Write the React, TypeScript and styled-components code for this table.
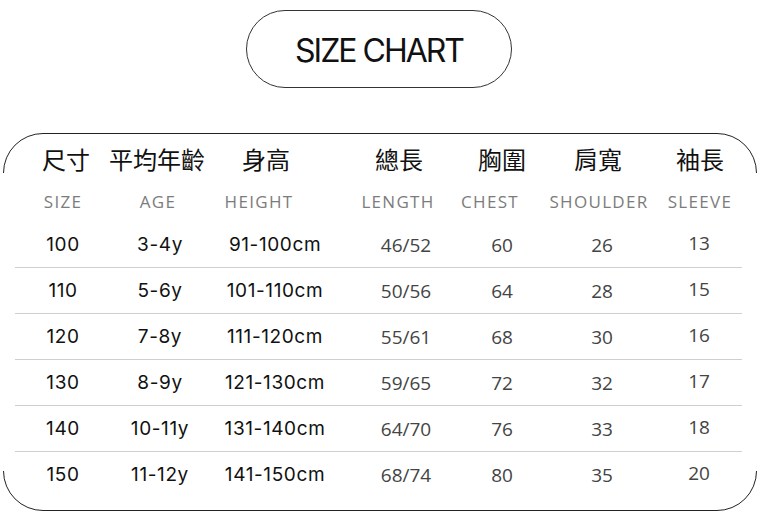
import styled, { createGlobalStyle } from "styled-components";

const SANS = `"Inter", "Liberation Sans", sans-serif`;
const OPEN = `"Open Sans", "Liberation Sans", sans-serif`;
const CJK = `"Noto Sans CJK TC", "Noto Sans CJK SC", sans-serif`;

type Kind = "main" | "first" | "soft";

type Column = {
	zh:string;
	en:string;
	width:number;
	zhShift:number;
	enShift:number;
	dataShift:number;
	kind:Kind;
};

const columns:Column[] = [
	{ zh: "尺寸", en: "SIZE", width: 96, zhShift: 3, enShift: 0, dataShift: 0, kind: "first" },
	{ zh: "平均年齡", en: "AGE", width: 96, zhShift: -2, enShift: -1, dataShift: 1, kind: "main" },
	{ zh: "身高", en: "HEIGHT", width: 126, zhShift: -4, enShift: -11, dataShift: 5, kind: "main" },
	{ zh: "總長", en: "LENGTH", width: 138, zhShift: -3, enShift: -4, dataShift: 4, kind: "soft" },
	{ zh: "胸圍", en: "CHEST", width: 60, zhShift: 1, enShift: -11, dataShift: 1, kind: "soft" },
	{ zh: "肩寬", en: "SHOULDER", width: 136, zhShift: -1, enShift: 0, dataShift: 3, kind: "soft" },
	{ zh: "袖長", en: "SLEEVE", width: 66, zhShift: 0, enShift: 0, dataShift: -1, kind: "soft" },
];

const rows = [
	["100", "3-4y", "91-100cm", "46/52", "60", "26", "13"],
	["110", "5-6y", "101-110cm", "50/56", "64", "28", "15"],
	["120", "7-8y", "111-120cm", "55/61", "68", "30", "16"],
	["130", "8-9y", "121-130cm", "59/65", "72", "32", "17"],
	["140", "10-11y", "131-140cm", "64/70", "76", "33", "18"],
	["150", "11-12y", "141-150cm", "68/74", "80", "35", "20"],
];

const template = columns.map((c) => `${c.width}px`).join(" ");

export default function App() {
	return (
		<Page>
			<GlobalStyle />
			<TitlePill>SIZE CHART</TitlePill>

			<Frame>
				<HeadRow>
					{columns.map((c) => (
						<ZhCell key={c.zh} $shift={c.zhShift}>{ c.zh }</ZhCell>
					))}
				</HeadRow>
				<LabelRow>
					{columns.map((c) => (
						<LabelCell key={c.en} $shift={c.enShift}>{ c.en }</LabelCell>
					))}
				</LabelRow>
				{rows.map((r, i) => (
					<DataRow key={r[0]} $last={i === rows.length - 1}>
						{r.map((v, j) => (
							<DataCell
							key={j}
							$shift={columns[j].dataShift}
							$kind={columns[j].kind}
							$lift={j === columns.length - 1}
							>
								{ v }
							</DataCell>
						))}
					</DataRow>
				))}
			</Frame>
		</Page>
	);
}

const GlobalStyle = createGlobalStyle`
	html, body {
		margin:0;
		padding:0;
		background:#fff;
	}
`;

const Page = styled.div`
	width:758px;
	height:519px;
	padding-top:10px;
	box-sizing:border-box;
	overflow:hidden;
`;

const TitlePill = styled.div`
	width:266px;
	height:78px;
	box-sizing:border-box;
	margin:0 auto;
	border:1px solid #333;
	border-radius:39px;
	display:flex;
	align-items:center;
	justify-content:center;
	font-family:${SANS};
	font-size:32px;
	letter-spacing:-2px;
	color:#111;
	padding-top:3px;
`;

/* rounded frame: only the four corner arcs and top / bottom lines are drawn */
const Frame = styled.div`
	position:relative;
	width:754px;
	box-sizing:border-box;
	margin:45px 0 0 3px;
	border:1px solid #222;
	border-radius:40px;
	padding:0 14px 12px 11px;

	&::before, &::after {
		content:"";
		position:absolute;
		top:39px;
		bottom:39px;
		width:3px;
		background:#fff;
	}
	&::before { left:-2px; }
	&::after { right:-2px; }
`;

const Row = styled.div`
	display:grid;
	grid-template-columns:${template};
	align-items:center;
`;

const HeadRow = styled(Row)`
	height:46px;
`;

const LabelRow = styled(Row)`
	height:42px;
`;

const DataRow = styled(Row)<{ $last:boolean }>`
	height:46px;
	box-sizing:border-box;
	border-bottom:1px solid ${(p) => p.$last ? "transparent" : "#cfcfcf"};
`;

const Cell = styled.div<{ $shift:number }>`
	display:flex;
	justify-content:center;
	white-space:nowrap;
	padding-left:${(p) => Math.max(0, p.$shift * 2)}px;
	padding-right:${(p) => Math.max(0, -p.$shift * 2)}px;
`;

const ZhCell = styled(Cell)`
	font-family:${CJK};
	font-size:24px;
	color:#111;
	padding-top:3px;
`;

const LabelCell = styled(Cell)`
	font-family:${OPEN};
	font-size:17px;
	letter-spacing:1.3px;
	color:#7c7c7c;
`;

const DataCell = styled(Cell)<{ $kind:Kind; $lift:boolean }>`
	font-family:${(p) => p.$kind === "soft" ? OPEN : SANS};
	font-size:19px;
	letter-spacing:${(p) => p.$kind === "soft" ? "0" : "0.6px"};
	font-weight:400;
	color:${(p) => p.$kind === "soft" ? "#444" : "#111"};
	padding-bottom:${(p) => p.$lift ? "3px" : "0"};
`;
